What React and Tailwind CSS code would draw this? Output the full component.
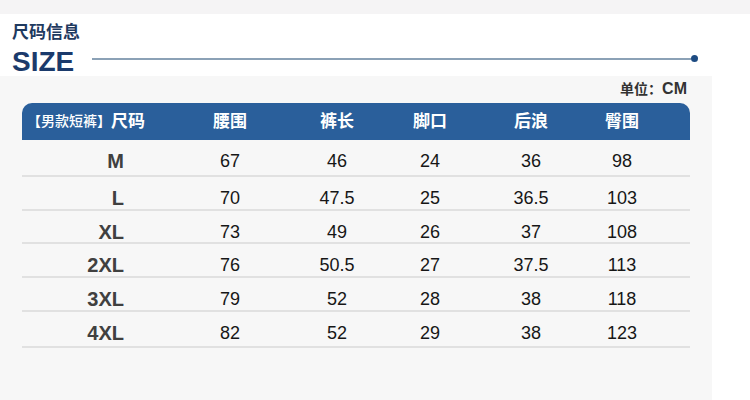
import React from "react";

const COLS = "grid grid-cols-[155px_106px_108px_78px_124px_58px_1fr]";

const rows = [
  { size: "M", h: "h-[37px]", vals: ["67", "46", "24", "36", "98"] },
  { size: "L", h: "h-[34px]", vals: ["70", "47.5", "25", "36.5", "103"] },
  { size: "XL", h: "h-[33px]", vals: ["73", "49", "26", "37", "108"] },
  { size: "2XL", h: "h-[34px]", vals: ["76", "50.5", "27", "37.5", "113"] },
  { size: "3XL", h: "h-[34px]", vals: ["79", "52", "28", "38", "118"] },
  { size: "4XL", h: "h-[36px]", vals: ["82", "52", "29", "38", "123"] },
];

const headers = ["腰围", "裤长", "脚口", "后浪", "臀围"];

export default function App() {
  return (
    <div className="w-[750px] h-[400px] bg-white overflow-hidden font-['Liberation_Sans','Noto_Sans_CJK_SC',sans-serif]">
      {/* top strip */}
      <div className="h-[14px] bg-[#f5f4f5]" />

      {/* title block */}
      <div className="h-[62px] pl-[12px] pt-[10px]">
        <div className="text-[17px] leading-none font-bold text-[#1f3a5f]">尺码信息</div>
        <div className="flex items-start mt-[7px]">
          <div className="w-[80px] text-[28px] leading-none font-black text-[#1b3a6b]">SIZE</div>
          <div className="w-[606px] h-[7px] mt-[7px] flex items-center">
            <div className="flex-1 h-[2px] bg-[#8ba1b6]" />
            <div className="w-[7px] h-[7px] rounded-full bg-[#1d4b82]" />
          </div>
        </div>
      </div>

      {/* gray panel */}
      <div className="w-[712px] h-[324px] bg-[#f7f7f7] pt-[5px]">
        <div className="flex justify-end items-baseline pr-[25px] leading-none font-bold text-[#333]">
          <span className="text-[14px]">单位：</span>
          <span className="text-[16px]">CM</span>
        </div>

        <div className="ml-[22px] w-[668px] mt-[6px]">
          {/* header */}
          <div className={`${COLS} h-[37px] bg-[#2a5f9b] rounded-t-[10px] text-white items-center`}>
            <div className="pl-[5px] flex items-center whitespace-nowrap">
              <span className="text-[14px] font-medium">【男款短裤】</span>
              <span className="text-[17px] font-bold">尺码</span>
            </div>
            {headers.map((h) => (
              <div key={h} className="text-center text-[17px] font-bold">{h}</div>
            ))}
            <div />
          </div>

          {/* body */}
          {rows.map((r) => (
            <div key={r.size} className={`${COLS} ${r.h} pt-[6px] items-center border-b-2 border-[#e1e1e1]`}>
              <div className="text-right pr-[53px] text-[20px] font-bold text-[#404040]">{r.size}</div>
              {r.vals.map((v, i) => (
                <div key={i} className="text-center text-[18px] text-[#161616]">{v}</div>
              ))}
              <div />
            </div>
          ))}
        </div>
      </div>
    </div>
  );
}
